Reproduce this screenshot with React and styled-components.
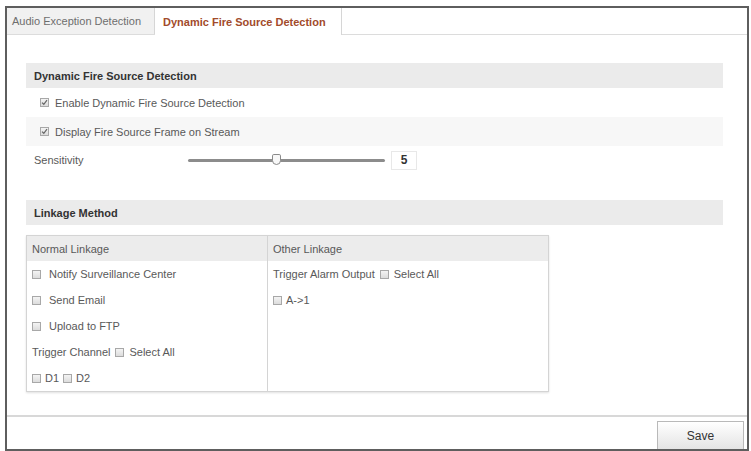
import React, { useState } from 'react';
import styled, { createGlobalStyle } from 'styled-components';

const GlobalStyle = createGlobalStyle`
  body {
    margin: 0;
    background: #fff;
    font-family: "Liberation Sans", Arial, sans-serif;
    font-size: 11px;
    color: #595959;
  }
`

const Frame = styled.div`
  box-sizing: border-box;
  margin: 6px 0 0 5px;
  width: 744px;
  height: 445px;
  border: 2px solid #5e5e5e;
  display: flex;
  flex-direction: column;
`

const TabBar = styled.div`
  display: flex;
  height: 26px;
  border-bottom: 1px solid #dcdcdc;
`

const Tab = styled.div`
  box-sizing: border-box;
  width: ${p => p.$width}px;
  height: ${p => (p.$active ? 27 : 26)}px;
  display: flex;
  align-items: center;
  padding-left: ${p => (p.$active ? 8 : 5)}px;
  background: ${p => (p.$active ? '#fff' : '#f1f1f1')};
  border-right: 1px solid #d6d6d6;
  color: ${p => (p.$active ? '#a24b2b' : '#6e6e6e')};
  font-weight: ${p => (p.$active ? 'bold' : 'normal')};
`

const Content = styled.div`
  flex: 1;
  padding: 28px 0 0 19px;
`

const SectionHeader = styled.div`
  width: 697px;
  height: 25px;
  display: flex;
  align-items: center;
  padding-left: 8px;
  box-sizing: border-box;
  background: #ebebeb;
  color: #333;
  font-weight: bold;
  margin-top: ${p => p.$top || 0}px;
`

const Row = styled.div`
  width: 697px;
  height: ${p => p.$height || 29}px;
  box-sizing: border-box;
  display: flex;
  align-items: center;
  gap: 6px;
  padding-left: ${p => p.$indent}px;
  background: ${p => (p.$shaded ? '#f7f7f7' : 'transparent')};
`

const Box = styled.span`
  box-sizing: border-box;
  width: 9px;
  height: 9px;
  flex: none;
  border: 1px solid #a8a8a8;
  background: linear-gradient(#f4f4f4, #dcdcdc);
  display: inline-flex;
  align-items: center;
  justify-content: center;
`

const Label = styled.span`
  width: 148px;
`

const Track = styled.div`
  position: relative;
  width: 197px;
  height: 3px;
  background: #8c8c8c;
  border-radius: 2px;
`

const Thumb = styled.span`
  position: absolute;
  top: -5px;
  width: 9px;
  height: 11px;
  box-sizing: border-box;
  background: #f8f8f8;
  border: 1px solid #8a8a8a;
  border-radius: 2px 2px 5px 5px;
`

const ValueBox = styled.div`
  box-sizing: border-box;
  width: 26px;
  height: 19px;
  border: 1px solid #e8e8e8;
  display: flex;
  align-items: center;
  justify-content: center;
  color: #333;
  font-weight: bold;
  font-size: 12px;
`

const Table = styled.div`
  margin-top: 10px;
  width: 521px;
  display: grid;
  grid-template-columns: 240px 1fr;
  border: 1px solid #d4d4d4;
  box-shadow: 0 1px 2px rgba(0, 0, 0, 0.12);
`

const HeadCell = styled.div`
  height: 25px;
  display: flex;
  align-items: center;
  padding-left: 5px;
  background: #ececec;
  border-left: ${p => (p.$divider ? '1px solid #d4d4d4' : 'none')};
`

const Cell = styled.div`
  border-left: ${p => (p.$divider ? '1px solid #d4d4d4' : 'none')};
`

const Line = styled.div`
  height: 26px;
  display: flex;
  align-items: center;
  gap: ${p => p.$gap}px;
  padding-left: 5px;
`

const Footer = styled.div`
  border-top: 2px solid #d8d8d8;
  height: 32px;
  display: flex;
  justify-content: flex-end;
  align-items: flex-end;
  padding-right: 3px;
`

const Button = styled.button`
  width: 87px;
  height: 28px;
  border: 1px solid #b9b9b9;
  border-bottom: none;
  background: linear-gradient(#ffffff, #e4e4e4);
  font-family: "Liberation Sans", Arial, sans-serif;
  font-size: 12px;
  color: #333;
  padding: 0;
`

const Check = ({ checked }) => (
  <Box>
    {checked && (
      <svg width="7" height="7" viewBox="0 0 7 7">
        <path d="M1 3.6 L2.8 5.3 L6 1.2" fill="none" stroke="#666" strokeWidth="1.2" />
      </svg>
    )}
  </Box>
)

const App = () => {
  const [sensitivity] = useState(5);
  const thumbLeft = ((sensitivity - 1) / 9) * 197 - 4;

  return (
    <>
      <GlobalStyle />
      <Frame>
        <TabBar>
          <Tab $width={148}>Audio Exception Detection</Tab>
          <Tab $width={187} $active>Dynamic Fire Source Detection</Tab>
        </TabBar>
        <Content>
          <SectionHeader>Dynamic Fire Source Detection</SectionHeader>
          <Row $indent={14}>
            <Check checked />
            <span>Enable Dynamic Fire Source Detection</span>
          </Row>
          <Row $indent={14} $shaded>
            <Check checked />
            <span>Display Fire Source Frame on Stream</span>
          </Row>
          <Row $indent={8} $height={28}>
            <Label>Sensitivity</Label>
            <Track>
              <Thumb style={{ left: thumbLeft }} />
            </Track>
            <ValueBox>{sensitivity}</ValueBox>
          </Row>

          <SectionHeader $top={26}>Linkage Method</SectionHeader>
          <Table>
            <HeadCell>Normal Linkage</HeadCell>
            <HeadCell $divider>Other Linkage</HeadCell>
            <Cell>
              <Line $gap={8}><Check /><span>Notify Surveillance Center</span></Line>
              <Line $gap={8}><Check /><span>Send Email</span></Line>
              <Line $gap={8}><Check /><span>Upload to FTP</span></Line>
              <Line $gap={5}><span>Trigger Channel</span><Check /><span>Select All</span></Line>
              <Line $gap={4}><Check /><span>D1</span><Check /><span>D2</span></Line>
            </Cell>
            <Cell $divider>
              <Line $gap={5}><span>Trigger Alarm Output</span><Check /><span>Select All</span></Line>
              <Line $gap={4}><Check /><span>A-&gt;1</span></Line>
            </Cell>
          </Table>
        </Content>
        <Footer>
          <Button>Save</Button>
        </Footer>
      </Frame>
    </>
  )
}

export default App;
